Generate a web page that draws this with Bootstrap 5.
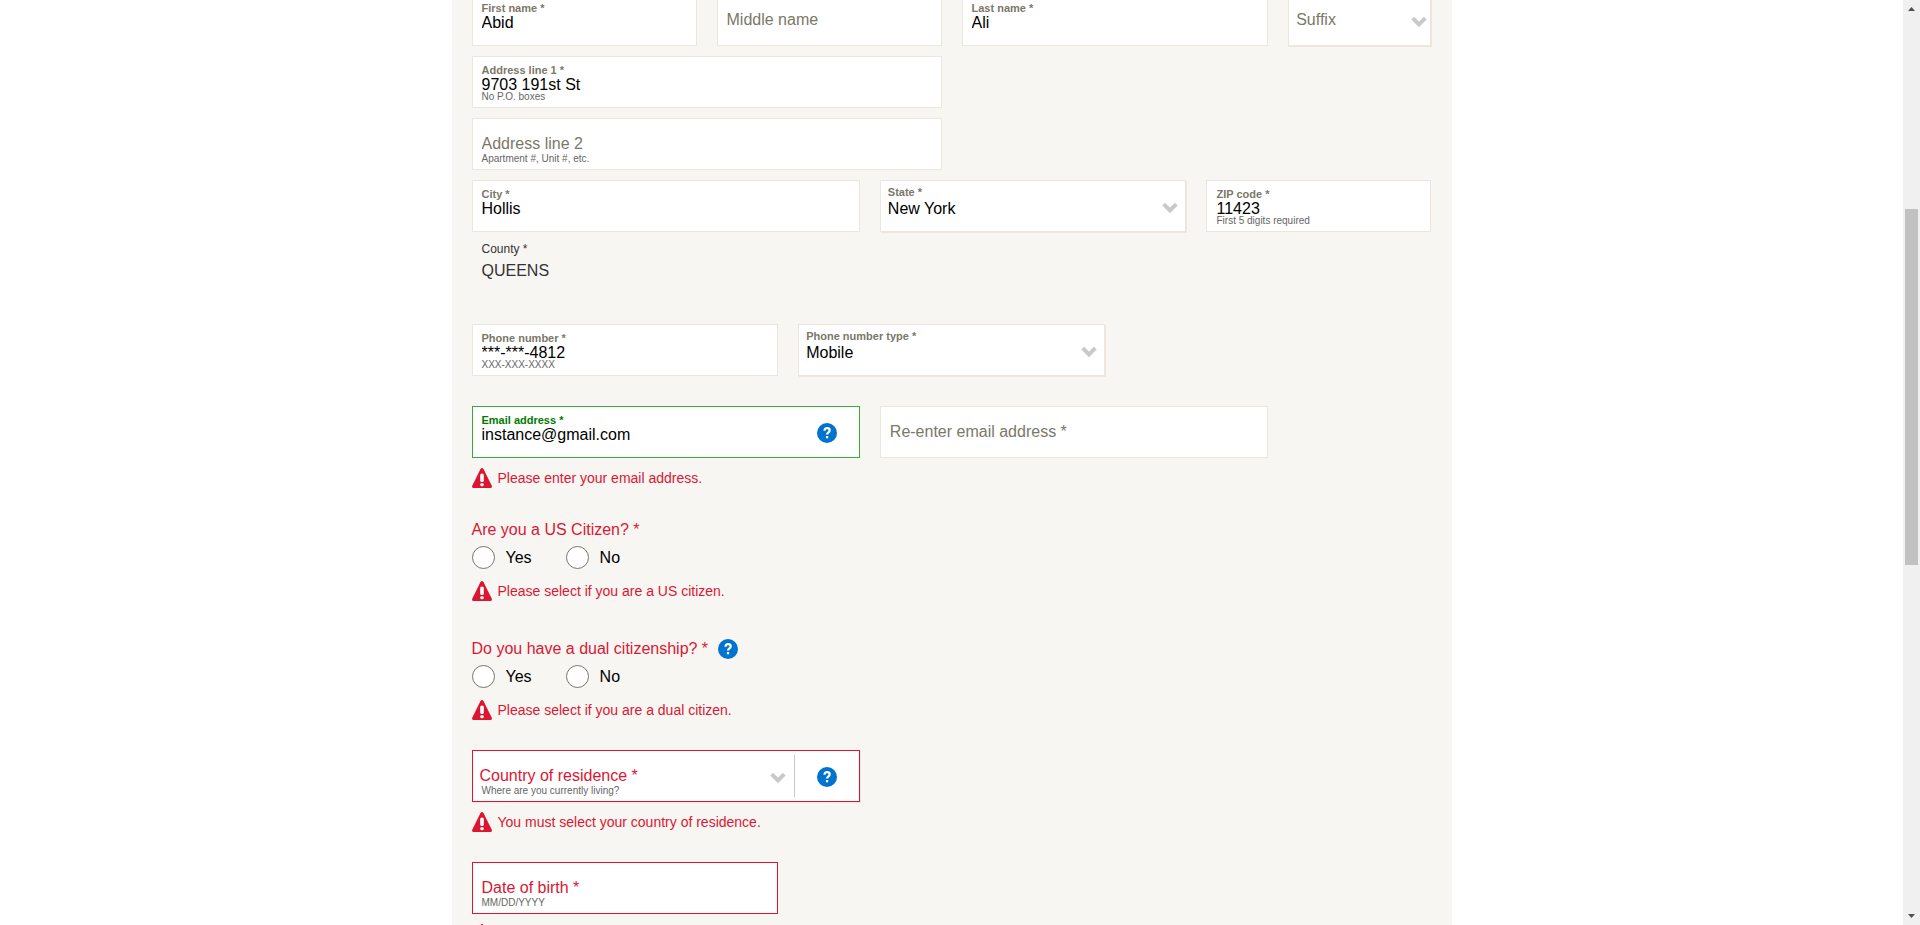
<!DOCTYPE html>
<html lang="en">
<head>
<meta charset="utf-8">
<meta name="viewport" content="width=device-width, initial-scale=1">
<title>Personal information</title>
<link href="https://cdn.jsdelivr.net/npm/bootstrap@5.3.0/dist/css/bootstrap.min.css" rel="stylesheet">
<style>
:root { --red: #db1632; --blue: #0073cf; --line: #ece6dc; --muted: #7a7868; }
body { font-family: "Liberation Sans", Arial, sans-serif; font-size: 16px; line-height: 18px; color: #000; background: #fff; }
.sheet { max-width: 1000px; padding: 0 20px; background: #f8f6f2; margin-top: -6px; }
.row { --bs-gutter-x: 20px; }
.line-gap { margin-bottom: 10px; }
.section { margin-top: 30px; }
.question { margin-top: 32px; }
.question + .question { margin-top: 38px; }
.field { position: relative; display: flex; flex-direction: column; height: 52px; padding: 7px 9px 0; background: #fff; border: 1px solid var(--line); }
.field label { font-size: 11px; line-height: 12px; font-weight: 700; color: var(--muted); }
.field input, .field select { appearance: none; width: 100%; height: 18px; padding: 0; border: 0; border-radius: 0; outline: 0; background: transparent; color: #000; font-size: 16px; line-height: 18px; }
.field input::placeholder { color: var(--muted); opacity: 1; }
.field small { font-size: 10px; line-height: 10px; color: #666; margin-top: -2px; }
.field.blank { padding-top: 16px; }
.field.blank small { margin-top: 1px; }
.field.pick { padding: 5px 7px 0; box-shadow: 1px 1px 0 var(--line); }
.field.pick label { margin-bottom: 2px; }
.field.pick small { padding-left: 2px; }
.field.pick.blank { padding-top: 16px; }
.field.pick.blank select { color: var(--muted); }
.field.valid { border-color: #35ad35; }
.field.valid label { color: #007a00; }
.field.invalid { border-color: var(--red); }
.field.pick.invalid select, .field.invalid input::placeholder { color: var(--red); }
.chev { position: absolute; right: 7px; top: 21px; width: 16px; height: 12px; pointer-events: none; }
.col-2 .chev { right: 3px; }
.with-help .chev { right: 73px; }
.help { width: 20px; height: 20px; padding: 0; border: 0; border-radius: 50%; background: var(--blue); display: block; }
.help svg { display: block; }
.field .help { position: absolute; right: 22px; top: 16px; }
.divider { position: absolute; right: 64px; top: 4px; bottom: 4px; width: 1px; background: #cdc8c1; }
.error { display: flex; align-items: center; gap: 6px; height: 20px; margin: 10px 0 0; color: var(--red); font-size: 14px; }
.ask { float: none; display: flex; align-items: center; gap: 10px; height: 20px; margin: 0 0 6px; font-size: 16px; color: var(--red); }
.choices { display: flex; gap: 34px; height: 23px; margin-bottom: 12px; }
.choices label { display: flex; align-items: center; gap: 11px; }
.choices input { appearance: none; width: 23px; height: 23px; margin: 0; border: 1px solid #77756a; border-radius: 50%; background: #fff; }
.choices + .error { margin-top: 0; }
.county { padding: 8px 10px 0; height: 84px; color: #333; }
.county dt { font-size: 12px; font-weight: 400; }
.county dd { margin: 4px 0 0; }
.scroller { width: 17px; background: #f0f0f0; padding: 7px 0; }
.thumb { width: 13px; height: 38.5vh; margin-top: 21.4vh; background: #c1c1c1; }
</style>
</head>
<body class="d-flex vh-100 overflow-hidden">
<svg class="d-none" aria-hidden="true">
  <symbol id="chevron" viewBox="0 0 16 12"><path d="M1.700 2.200 8 8.500l6.300-6.300" fill="none" stroke="#cac9c8" stroke-width="4"/></symbol>
  <symbol id="question" viewBox="0 0 20 20"><path d="M7.500 7.700C7.500 5.900 8.500 5.200 10 5.200s2.700.7 2.700 2.200c0 1.900-2.700 2-2.700 4.200" fill="none" stroke="#fff" stroke-width="2.200"/><path d="M8.900 13h2.300v2.300H8.900z" fill="#fff"/></symbol>
  <symbol id="alert" viewBox="0 0 20 20"><path d="M8.400 1.200Q10-1.200 11.600 1.200L19.700 17.600Q20.500 20 18.500 20h-17Q-.5 20 .3 17.600z" fill="#db1632"/><rect x="8.200" y="5.500" width="3.600" height="8.500" rx="1.600" fill="#fff"/><rect x="8.200" y="15.200" width="3.600" height="3" rx="1.400" fill="#fff"/></symbol>
</svg>
<main class="flex-grow-1 overflow-hidden">
<form class="sheet mx-auto pb-5">
  <div class="row line-gap">
    <div class="col-3"><div class="field"><label for="first">First name *</label><input id="first" type="text" value="Abid"></div></div>
    <div class="col-3"><div class="field blank"><input type="text" aria-label="Middle name" placeholder="Middle name"></div></div>
    <div class="col-4"><div class="field"><label for="last">Last name *</label><input id="last" type="text" value="Ali"></div></div>
    <div class="col-2"><div class="field pick blank"><select aria-label="Suffix"><option>Suffix</option></select><svg class="chev"><use href="#chevron"/></svg></div></div>
  </div>
  <div class="row line-gap">
    <div class="col-6"><div class="field"><label for="addr1">Address line 1 *</label><input id="addr1" type="text" value="9703 191st St"><small>No P.O. boxes</small></div></div>
  </div>
  <div class="row line-gap">
    <div class="col-6"><div class="field blank"><input type="text" aria-label="Address line 2" placeholder="Address line 2"><small>Apartment #, Unit #, etc.</small></div></div>
  </div>
  <div class="row">
    <div class="col-5"><div class="field"><label for="city">City *</label><input id="city" type="text" value="Hollis"></div></div>
    <div class="col-4"><div class="field pick"><label for="state">State *</label><select id="state"><option>New York</option></select><svg class="chev"><use href="#chevron"/></svg></div></div>
    <div class="col-3"><div class="field"><label for="zip">ZIP code *</label><input id="zip" type="text" value="11423"><small>First 5 digits required</small></div></div>
  </div>
  <dl class="county mb-2"><dt>County *</dt><dd>QUEENS</dd></dl>
  <div class="row">
    <div class="col-4"><div class="field"><label for="phone">Phone number *</label><input id="phone" type="text" value="***-***-4812"><small>XXX-XXX-XXXX</small></div></div>
    <div class="col-4"><div class="field pick"><label for="ptype">Phone number type *</label><select id="ptype"><option>Mobile</option></select><svg class="chev"><use href="#chevron"/></svg></div></div>
  </div>
  <div class="row section">
    <div class="col-5"><div class="field valid"><label for="email">Email address *</label><input id="email" type="text" value="instance@gmail.com"><button type="button" class="help" aria-label="Help with email"><svg width="20" height="20"><use href="#question"/></svg></button></div></div>
    <div class="col-5"><div class="field blank"><input type="text" aria-label="Re-enter email address" placeholder="Re-enter email address *"></div></div>
  </div>
  <p class="error"><svg width="20" height="20"><use href="#alert"/></svg>Please enter your email address.</p>
  <fieldset class="question">
    <legend class="ask">Are you a US Citizen? *</legend>
    <div class="choices"><label><input type="radio" name="citizen">Yes</label><label><input type="radio" name="citizen">No</label></div>
    <p class="error"><svg width="20" height="20"><use href="#alert"/></svg>Please select if you are a US citizen.</p>
  </fieldset>
  <fieldset class="question">
    <legend class="ask">Do you have a dual citizenship? * <button type="button" class="help" aria-label="Help with dual citizenship"><svg width="20" height="20"><use href="#question"/></svg></button></legend>
    <div class="choices"><label><input type="radio" name="dual">Yes</label><label><input type="radio" name="dual">No</label></div>
    <p class="error"><svg width="20" height="20"><use href="#alert"/></svg>Please select if you are a dual citizen.</p>
  </fieldset>
  <div class="row section">
    <div class="col-5"><div class="field pick blank invalid with-help"><select aria-label="Country of residence"><option>Country of residence *</option></select><small>Where are you currently living?</small><svg class="chev"><use href="#chevron"/></svg><span class="divider"></span><button type="button" class="help" aria-label="Help with country"><svg width="20" height="20"><use href="#question"/></svg></button></div></div>
  </div>
  <p class="error"><svg width="20" height="20"><use href="#alert"/></svg>You must select your country of residence.</p>
  <div class="row section">
    <div class="col-4"><div class="field blank invalid"><input type="text" aria-label="Date of birth" placeholder="Date of birth *"><small>MM/DD/YYYY</small></div></div>
  </div>
  <p class="error"><svg width="20" height="20"><use href="#alert"/></svg></p>
</form>
</main>
<aside class="scroller d-flex flex-column align-items-center flex-shrink-0" aria-hidden="true">
  <svg width="7" height="4"><path d="M0 4 3.500 0 7 4z" fill="#505050"/></svg>
  <div class="thumb"></div>
  <svg class="mt-auto" width="7" height="4"><path d="M0 0h7L3.500 4z" fill="#505050"/></svg>
</aside>
<script src="https://cdn.jsdelivr.net/npm/bootstrap@5.3.0/dist/js/bootstrap.bundle.min.js"></script>
</body>
</html>
